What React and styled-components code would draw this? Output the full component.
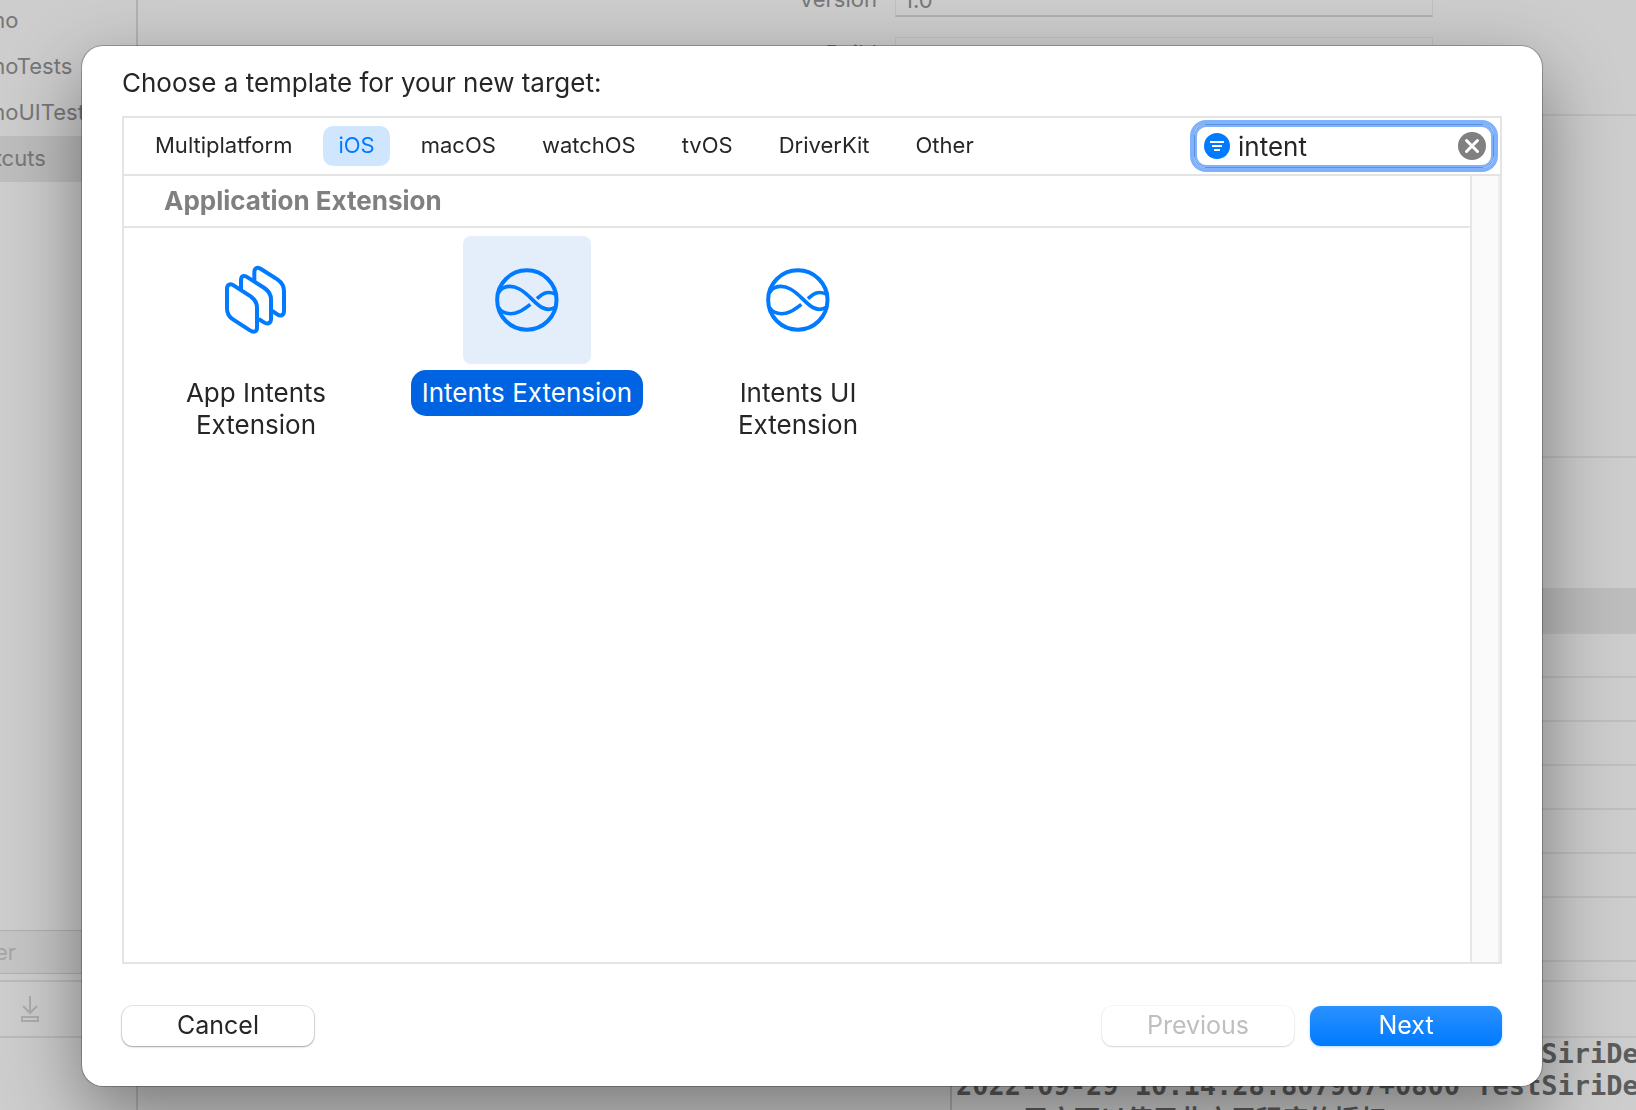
import React, { useState } from "react";
import styled, { createGlobalStyle, css } from "styled-components";

const GlobalStyle = createGlobalStyle`
  *, *::before, *::after { box-sizing: border-box; }
  html, body, #root { height: 100%; }
  body { margin: 0; overflow: hidden; font-family: Inter, "Noto Sans CJK SC", sans-serif; color: #262626; }
  button, input { font: inherit; color: inherit; }
  h1, h2, ul, p { margin: 0; padding: 0; font: inherit; }
  ul { list-style: none; }
`;

/* ---------- editor window behind the sheet ---------- */

const Editor = styled.div`
  display: flex;
  height: 100%;
  overflow: hidden;
  background: #cdcdcd;
  color: #777;
  font-size: 22px;
`;

const Sidebar = styled.aside`
  display: flex;
  flex-direction: column;
  flex: 0 0 138px;
  border-right: 2px solid #b2b2b2;
  overflow: hidden;
`;

const TargetList = styled.ul`
  flex: 1;
  margin-top: -2px;
`;

const Target = styled.li`
  height: 46px;
  line-height: 44px;
  text-indent: -14px;
  white-space: nowrap;
  background: ${(p) => (p.$selected ? "#bdbdbd" : "transparent")};
`;

const FilterBox = styled.input`
  height: 44px;
  padding: 0;
  border: 1px solid #afafaf;
  border-width: 1px 0;
  border-radius: 0;
  background: #c5c5c5;
  text-indent: -12px;
  outline: none;
  &::placeholder { color: #a6a6a6; opacity: 1; }
`;

const SidebarTools = styled.div`
  display: flex;
  align-items: center;
  height: 58px;
  margin: 6px 0 72px;
  padding-left: 20px;
  border: solid #bbb;
  border-width: 2px 0;
`;

const IconButton = styled.button`
  display: flex;
  padding: 0;
  border: 0;
  background: none;
`;

const Main = styled.main`
  display: flex;
  flex-direction: column;
  flex: 1;
  min-width: 0;
`;

const Section = styled.section`
  flex: 0 0 ${(p) => p.$height}px;
  overflow: hidden;
  border-bottom: ${(p) => (p.$plain ? "0" : "2px solid #bfbfbf")};
  background: ${(p) => (p.$band ? "#bdbdbd" : "transparent")};
`;

const Identity = styled.form`
  display: grid;
  grid-template-columns: 739px 538px;
  gap: 20px 18px;
  margin-top: -17px;
`;

const FieldLabel = styled.label`
  line-height: 32px;
  text-align: right;
`;

const Field = styled.input`
  height: 34px;
  padding: 0 8px;
  border: 1px solid #c0c0c0;
  border-bottom: 2px solid #b0b0b0;
  background: transparent;
  outline: none;
`;

const Console = styled.div`
  flex: 1;
  margin-left: 812px;
  padding-left: 4px;
  border-left: 2px solid #adadad;
  overflow: hidden;
  white-space: pre;
  color: #5c5c5c;
  font: bold 27px/32px "DejaVu Sans Mono", "Noto Sans CJK SC", monospace;
`;

const ConsoleNote = styled.p`
  padding: 2px 0 0 66px;
  font-size: 26px;
`;

/* ---------- sheet ---------- */

const Overlay = styled.div`
  position: fixed;
  inset: 0;
  display: flex;
  padding: 46px 94px 24px 82px;
`;

const Sheet = styled.div`
  display: flex;
  flex-direction: column;
  flex: 1;
  min-width: 0;
  padding: 20px 40px 40px;
  border-radius: 21px;
  background: #fff;
  box-shadow: 0 0 0 1px rgba(0, 0, 0, 0.26), 0 28px 76px rgba(0, 0, 0, 0.42);
`;

const Title = styled.h1`
  margin-bottom: 16px;
  font-size: 26px;
  line-height: 34px;
`;

const Chooser = styled.div`
  display: flex;
  flex-direction: column;
  flex: 1;
  border: 2px solid #e4e4e4;
`;

const Toolbar = styled.div`
  display: flex;
  align-items: center;
  justify-content: space-between;
  height: 58px;
  padding: 0 6px 0 16px;
  border-bottom: 2px solid #e4e4e4;
`;

const Tabs = styled.div`
  display: flex;
  gap: 16px;
`;

const Tab = styled.button`
  height: 40px;
  padding: 0 15px 2px;
  border: 0;
  border-radius: 10px;
  font-size: 22px;
  line-height: 38px;
  background: ${(p) => (p.$active ? "#d0e6ff" : "transparent")};
  color: ${(p) => (p.$active ? "#007aff" : "inherit")};
`;

const SearchBox = styled.div`
  display: flex;
  align-items: center;
  width: 300px;
  height: 44px;
  padding: 0 7px 0 9px;
  gap: 8px;
  border: 1px solid #5f92dc;
  border-radius: 12px;
  box-shadow: 0 0 0 4px #80b2fb, inset 0 0 0 2px #80b2fb;
`;

const SearchInput = styled.input`
  flex: 1;
  min-width: 0;
  height: 36px;
  padding: 0;
  border: 0;
  outline: 0;
  background: transparent;
  font-size: 26px;
`;

const Body = styled.div`
  display: flex;
  flex: 1;
`;

const Content = styled.div`
  flex: 1;
  min-width: 0;
`;

const ScrollTrack = styled.div`
  width: 30px;
  border: 2px solid #e6e6e6;
  border-width: 0 2px;
  border-right-color: #eee;
  background: #fafafa;
`;

const GroupTitle = styled.h2`
  height: 52px;
  padding-left: 40px;
  border-bottom: 2px solid #e4e4e4;
  color: #808080;
  font-size: 26px;
  font-weight: 700;
  line-height: 50px;
`;

const Templates = styled.div`
  display: grid;
  grid-template-columns: repeat(auto-fill, 264px);
  gap: 7px;
  padding-top: 8px;
`;

const Template = styled.button`
  display: flex;
  flex-direction: column;
  align-items: center;
  gap: 6px;
  padding: 0;
  border: 0;
  background: none;
`;

const Tile = styled.span`
  display: flex;
  width: 128px;
  height: 128px;
  border-radius: 8px;
  color: #007aff;
  background: ${(p) => (p.$selected ? "#e4eefb" : "transparent")};
`;

const Caption = styled.span`
  max-width: 236px;
  padding: 7px 11px;
  border-radius: 15px;
  font-size: 26px;
  line-height: 32px;
  ${(p) =>
    p.$selected &&
    css`
      background: #0063e1;
      color: #fff;
    `}
`;

const Footer = styled.footer`
  display: flex;
  justify-content: space-between;
  margin-top: 42px;
`;

const Actions = styled.div`
  display: flex;
  gap: 16px;
`;

const PushButton = styled.button`
  width: 192px;
  height: 40px;
  padding: 0 0 2px;
  border: 0;
  border-radius: 11px;
  background: #fff;
  font-size: 25px;
  line-height: 38px;
  box-shadow: 0 0 0 1px rgba(0, 0, 0, 0.1), 0 1px 2px rgba(0, 0, 0, 0.3);
  &:disabled {
    color: #bfbfbf;
    box-shadow: 0 0 0 1px rgba(0, 0, 0, 0.04), 0 1px 2px rgba(0, 0, 0, 0.14);
  }
  ${(p) =>
    p.$primary &&
    css`
      color: #fff;
      background: linear-gradient(#2b91ff, #007aff);
      box-shadow: 0 1px 3px rgba(0, 122, 255, 0.3);
    `}
`;

/* ---------- icons ---------- */

const LayersIcon = () => (
  <svg width="128" height="128" viewBox="96 48 384 384" fill="none" stroke="currentColor" strokeWidth="12" aria-hidden="true">
    <path d="M201 207V266C201 280 208 291 220 299L270 331C282 339 291 335 291 323V262C291 248 284 238 272 229L222 197C211 189 201 193 201 207Z" />
    <path d="M243 209V181C243 167 253 165 263 172L313 204C326 213 333 224 333 238V297C333 310 323 314 312 307L296 297" />
    <path d="M283 185V157C283 143 293 140 303 147L352 178C365 187 372 199 372 213V272C372 286 362 290 352 283L337 273" />
  </svg>
);

const SiriIcon = () => (
  <svg width="128" height="128" viewBox="69 48 384 384" fill="none" stroke="currentColor" strokeWidth="11" aria-hidden="true">
    <circle cx="260.500" cy="240" r="89" strokeWidth="12" />
    <path d="M175 219C185 198 212 193 238 207C262 220 277 241 295 255C311 268 330 272 347 261" />
    <path d="M175 261C185 281 212 287 238 275C251 269 261 261 271 253" />
    <path d="M291 236C304 224 317 210 346 222" />
    <path d="M348 213Q352 240 348 268" strokeWidth="7" />
  </svg>
);

const FilterIcon = () => (
  <svg width="26" height="26" viewBox="0 0 26 26" aria-hidden="true">
    <circle cx="13" cy="13" r="13" fill="#007aff" />
    <path d="M6 9H20M8 13H18M10 17H16" stroke="#fff" strokeWidth="2" />
  </svg>
);

const ClearIcon = () => (
  <svg width="28" height="28" viewBox="0 0 28 28" aria-hidden="true">
    <circle cx="14" cy="14" r="14" fill="#808080" />
    <path d="M8.500 8.500L19.500 19.500M19.500 8.500L8.500 19.500" stroke="#fff" strokeWidth="3" strokeLinecap="round" />
  </svg>
);

const ImportIcon = () => (
  <svg width="20" height="28" viewBox="0 0 20 28" fill="none" stroke="#acacac" strokeWidth="2" aria-hidden="true">
    <path d="M10 1V18M3 11L10 18L17 11M2 22H18V26H2Z" />
  </svg>
);

/* ---------- data ---------- */

const targets = ["mo", "moTests", "moUITests", "rtcuts"];
const platforms = ["Multiplatform", "iOS", "macOS", "watchOS", "tvOS", "DriverKit", "Other"];
const templates = [
  { name: "App Intents Extension", Icon: LayersIcon },
  { name: "Intents Extension", Icon: SiriIcon },
  { name: "Intents UI Extension", Icon: SiriIcon },
];
const logLines = [
  "2022-09-29 10:14:28.807967+0800 TestSiriDemo",
  "2022-09-29 10:14:28.807967+0800 TestSiriDemo",
];

export default function App() {
  const [platform, setPlatform] = useState("iOS");
  const [selected, setSelected] = useState("Intents Extension");
  const [query, setQuery] = useState("intent");

  return (
    <>
      <GlobalStyle />
      <Editor>
        <Sidebar>
          <TargetList>
            {targets.map((name, i) => (
              <Target key={name} $selected={i === 3}>{name}</Target>
            ))}
          </TargetList>
          <FilterBox placeholder="ter" aria-label="Filter targets" />
          <SidebarTools>
            <IconButton aria-label="Import"><ImportIcon /></IconButton>
          </SidebarTools>
        </Sidebar>
        <Main>
          <Section $height={116}>
            <Identity>
              <FieldLabel htmlFor="version">Version</FieldLabel>
              <Field id="version" defaultValue="1.0" />
              <FieldLabel htmlFor="build">Build</FieldLabel>
              <Field id="build" defaultValue="1" />
            </Identity>
          </Section>
          <Section $height={342} />
          <Section $height={130} $plain />
          <Section $height={46} $band />
          {[44, 44, 44, 44, 44, 44, 64, 20, 56].map((h, i) => (
            <Section key={i} $height={h} />
          ))}
          <Console>
            {logLines.map((line, i) => (
              <p key={i}>{line}</p>
            ))}
            <ConsoleNote>用户可以使用此应用程序的授权</ConsoleNote>
          </Console>
        </Main>
      </Editor>

      <Overlay>
        <Sheet role="dialog" aria-labelledby="sheet-title">
          <Title id="sheet-title">Choose a template for your new target:</Title>
          <Chooser>
            <Toolbar>
              <Tabs>
                {platforms.map((name) => (
                  <Tab key={name} $active={name === platform} onClick={() => setPlatform(name)}>{name}</Tab>
                ))}
              </Tabs>
              <SearchBox>
                <FilterIcon />
                <SearchInput aria-label="Filter templates" value={query} onChange={(e) => setQuery(e.target.value)} />
                <IconButton aria-label="Clear" onClick={() => setQuery("")}><ClearIcon /></IconButton>
              </SearchBox>
            </Toolbar>
            <Body>
              <Content>
                <GroupTitle>Application Extension</GroupTitle>
                <Templates>
                  {templates.map(({ name, Icon }) => (
                    <Template key={name} onClick={() => setSelected(name)}>
                      <Tile $selected={name === selected}><Icon /></Tile>
                      <Caption $selected={name === selected}>{name}</Caption>
                    </Template>
                  ))}
                </Templates>
              </Content>
              <ScrollTrack />
            </Body>
          </Chooser>
          <Footer>
            <PushButton>Cancel</PushButton>
            <Actions>
              <PushButton disabled>Previous</PushButton>
              <PushButton $primary>Next</PushButton>
            </Actions>
          </Footer>
        </Sheet>
      </Overlay>
    </>
  );
}
